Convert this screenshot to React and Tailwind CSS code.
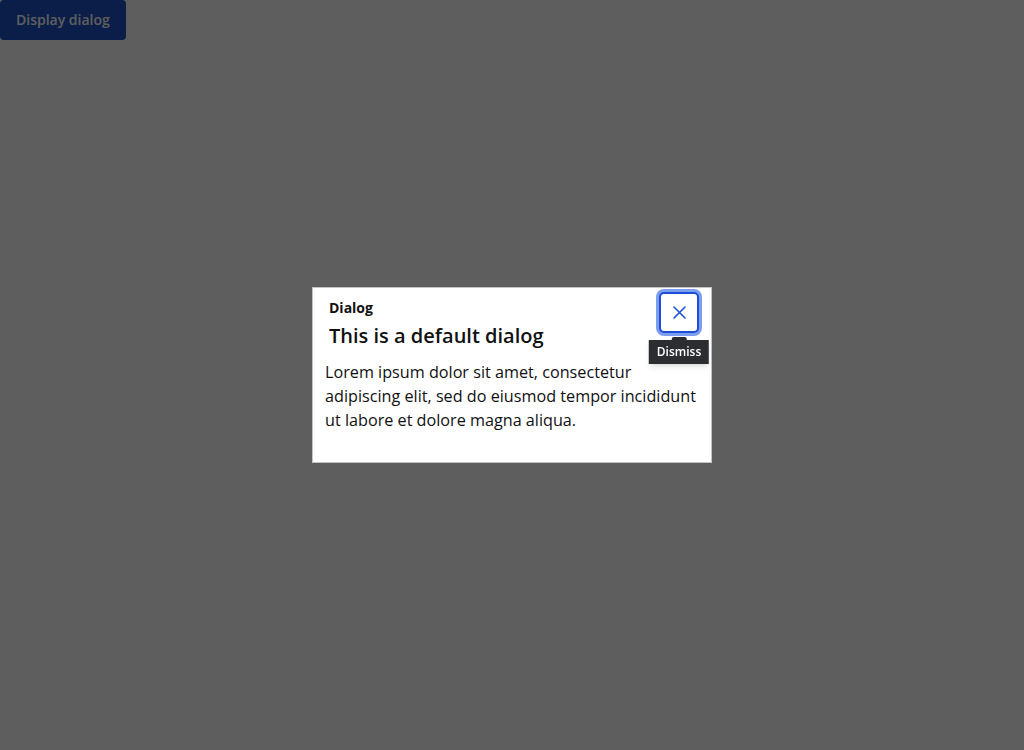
import React from "react";

const App = () => {
  return (
    <div className="min-h-screen bg-white font-['Open_Sans',sans-serif]">
      {/* Trigger */}
      <button className="h-10 px-4 rounded-[4px] bg-[#1b52c5] text-white text-sm font-semibold">
        Display dialog
      </button>

      {/* Overlay */}
      <div className="fixed inset-0 bg-black/[0.63] flex items-center justify-center">
        <div className="w-[400px] h-[176px] bg-white border border-[#c4c4c4] flex flex-col">
          {/* Header */}
          <div className="flex items-start justify-between">
            <div className="pl-4 pt-[10px]">
              <p className="text-sm leading-5 font-bold text-[#111]">Dialog</p>
              <h2 className="mt-1 text-xl leading-7 font-semibold text-[#111]">This is a default dialog</h2>
            </div>
            <div className="relative mt-1 mr-3">
              <button className="w-10 h-[41px] rounded-[5px] bg-white border-2 border-[#1d4ed8] ring-[3px] ring-[#7d9ef0] flex items-center justify-center">
                <svg width="13" height="13" viewBox="0 0 13 13" fill="none">
                  <path d="M1 1L12 12M12 1L1 12" stroke="#1d4ed8" strokeWidth="1.6" strokeLinecap="round" />
                </svg>
              </button>
              {/* Tooltip */}
              <div className="absolute top-[45px] left-1/2 -translate-x-1/2 flex flex-col items-center">
                <div className="w-[15px] h-[3px] bg-[#2b2d31] rounded-t-[2px]" />
                <div className="h-6 px-2 bg-[#2b2d31] text-white text-xs font-semibold leading-6 whitespace-nowrap shadow-md">
                  Dismiss
                </div>
              </div>
            </div>
          </div>

          {/* Body */}
          <p className="mt-[10px] px-3 text-[16.2px] leading-6 text-[#111]">
            Lorem ipsum dolor sit amet, consectetur adipiscing elit, sed do eiusmod tempor incididunt ut labore et dolore magna aliqua.
          </p>
        </div>
      </div>
    </div>
  );
};

export default App;
